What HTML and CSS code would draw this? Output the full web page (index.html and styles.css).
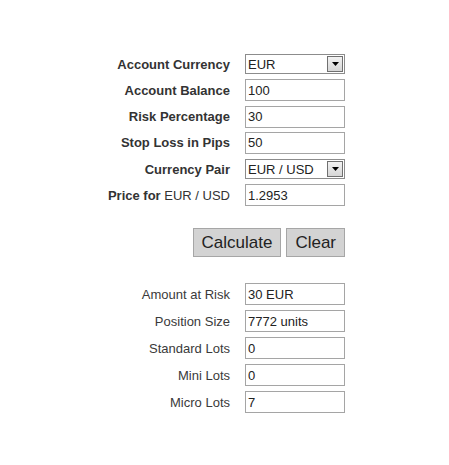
FILE: index.html
```html
<!DOCTYPE html>
<html>
<head>
<meta charset="utf-8">
<link rel="stylesheet" href="styles.css">
</head>
<body>
<div class="calc">
  <div class="form-grid inputs">
    <label class="lbl">Account Currency</label>
    <div class="select-wrap"><select class="sel"><option>EUR</option></select><span class="sel-btn"><svg width="7" height="4" viewBox="0 0 7 4"><path d="M0 0H7L3.5 4Z" fill="#000"/></svg></span></div>

    <label class="lbl">Account Balance</label>
    <input class="field" type="text" value="100">

    <label class="lbl">Risk Percentage</label>
    <input class="field" type="text" value="30">

    <label class="lbl">Stop Loss in Pips</label>
    <input class="field" type="text" value="50">

    <label class="lbl">Currency Pair</label>
    <div class="select-wrap"><select class="sel"><option>EUR / USD</option></select><span class="sel-btn"><svg width="7" height="4" viewBox="0 0 7 4"><path d="M0 0H7L3.5 4Z" fill="#000"/></svg></span></div>

    <label class="lbl">Price for <span class="pair">EUR / USD</span></label>
    <input class="field" type="text" value="1.2953">
  </div>

  <div class="actions">
    <button class="btn">Calculate</button>
    <button class="btn">Clear</button>
  </div>

  <div class="form-grid results">
    <label class="lbl plain">Amount at Risk</label>
    <input class="field" type="text" value="30 EUR">

    <label class="lbl plain">Position Size</label>
    <input class="field" type="text" value="7772 units">

    <label class="lbl plain">Standard Lots</label>
    <input class="field" type="text" value="0">

    <label class="lbl plain">Mini Lots</label>
    <input class="field" type="text" value="0">

    <label class="lbl plain">Micro Lots</label>
    <input class="field" type="text" value="7">
  </div>
</div>
</body>
</html>
```

FILE: styles.css
```css
html, body {
  margin: 0;
  padding: 0;
  background: #fff;
}

body {
  font-family: "Liberation Sans", Arial, sans-serif;
  font-size: 13px;
  color: #333;
}

.calc {
  width: 241px;
  margin: 0 auto;
  padding-top: 53px;
}

.form-grid {
  display: grid;
  grid-template-columns: 126px 100px;
  column-gap: 15px;
  grid-auto-rows: 22px;
  align-items: center;
}

.inputs {
  row-gap: 4.3px;
}

.results {
  row-gap: 5px;
  margin-top: 26px;
}

.lbl {
  text-align: right;
  font-weight: bold;
  white-space: nowrap;
  color: #333;
}

.lbl.plain {
  font-weight: normal;
  color: #3a3a3a;
}

.pair {
  font-weight: normal;
}

.field {
  box-sizing: border-box;
  width: 100px;
  height: 22px;
  margin: 0;
  padding: 0 0 0 2px;
  border: 1px solid #a5a5a5;
  font-family: "Liberation Sans", Arial, sans-serif;
  font-size: 13px;
  color: #222;
  background: #fff;
  outline: none;
}

.select-wrap {
  position: relative;
  width: 100px;
  height: 20px;
}

.sel {
  -webkit-appearance: none;
  appearance: none;
  box-sizing: border-box;
  width: 100px;
  height: 20px;
  margin: 0;
  padding: 0 0 0 2px;
  border: 1px solid #8c8c8c;
  border-radius: 0;
  background: #fff;
  font-family: "Liberation Sans", Arial, sans-serif;
  font-size: 13px;
  color: #222;
  outline: none;
}

.sel-btn {
  position: absolute;
  top: 2px;
  right: 2px;
  box-sizing: border-box;
  width: 16px;
  height: 16px;
  border: 1px solid #707070;
  background: linear-gradient(#f2f2f2, #d6d6d6);
  display: flex;
  align-items: center;
  justify-content: center;
  pointer-events: none;
}

.actions {
  display: flex;
  justify-content: flex-end;
  gap: 5px;
  margin-top: 22px;
}

.btn {
  box-sizing: border-box;
  height: 29px;
  margin: 0;
  padding: 0 8px;
  border: 1px solid #a6a6a6;
  border-radius: 0;
  background: #d3d3d3;
  font-family: "Liberation Sans", Arial, sans-serif;
  font-size: 17px;
  color: #222;
}
```
